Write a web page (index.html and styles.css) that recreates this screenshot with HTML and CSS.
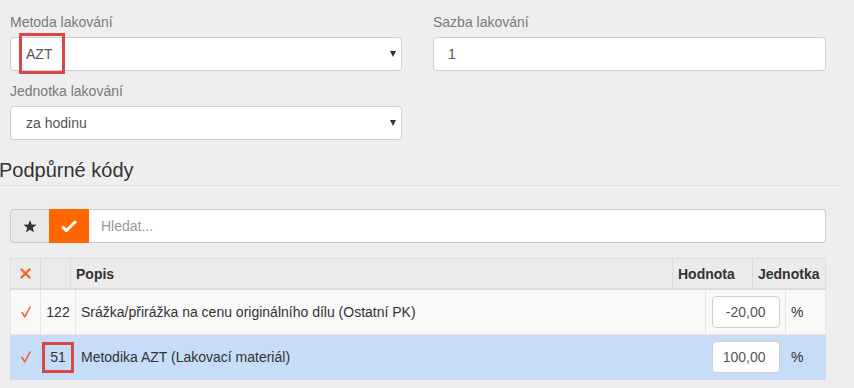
FILE: index.html
```html
<!DOCTYPE html>
<html lang="cs">
<head>
  <meta charset="UTF-8">
  <meta name="viewport" content="width=device-width, initial-scale=1.0">
  <title>Lakování</title>
  <link rel="stylesheet" href="styles.css">
</head>
<body>
  <div class="page">
    <!-- nastavení lakování -->
    <div class="form-row">
      <div class="form-col">
        <label class="field-label" for="metoda">Metoda lakování</label>
        <div class="select-wrap">
          <select id="metoda" class="field">
            <option>AZT</option>
          </select>
          <span class="mark mark-azt"></span>
        </div>
        <label class="field-label second" for="jednotka">Jednotka lakování</label>
        <div class="select-wrap">
          <select id="jednotka" class="field">
            <option>za hodinu</option>
          </select>
        </div>
      </div>
      <div class="form-col">
        <label class="field-label" for="sazba">Sazba lakování</label>
        <input type="text" id="sazba" class="field" value="1">
      </div>
    </div>

    <div class="section-head">
      <h2>Podpůrné kódy</h2>
    </div>

    <!-- hledání -->
    <div class="search-group">
      <button class="btn-star" type="button">
        <svg width="14" height="13" viewBox="0 0 14 13"><polygon points="7,0 8.7,4.6 13.6,4.7 9.7,7.7 11.1,12.5 7,9.7 2.9,12.5 4.3,7.7 0.4,4.7 5.3,4.6" fill="#333"/></svg>
      </button>
      <button class="btn-check" type="button">
        <svg width="16" height="13" viewBox="0 0 16 13"><path d="M2 7.5 L5.5 10.5 L14 2" fill="none" stroke="#fff" stroke-width="3" stroke-linecap="round" stroke-linejoin="round"/></svg>
      </button>
      <input type="text" class="search-input" placeholder="Hledat...">
    </div>

    <!-- tabulka kódů -->
    <table class="codes-head">
      <colgroup>
        <col style="width:30px"><col style="width:30px"><col><col style="width:80px"><col style="width:73px">
      </colgroup>
      <tr>
        <th class="c-icon">
          <svg width="11" height="11" viewBox="0 0 11 11"><path d="M1.5 1.5 L9.5 9.5 M9.5 1.5 L1.5 9.5" stroke="#f26522" stroke-width="2.4" stroke-linecap="round"/></svg>
        </th>
        <th></th>
        <th>Popis</th>
        <th>Hodnota</th>
        <th>Jednotka</th>
      </tr>
    </table>
    <table class="codes-body">
      <colgroup>
        <col style="width:30px"><col style="width:35px"><col><col style="width:80px"><col style="width:40px">
      </colgroup>
      <tr>
        <td class="c-icon">
          <svg width="10" height="12" viewBox="0 0 10 12"><path d="M1 6.5 L3.8 10.8 L9 1" fill="none" stroke="#f26522" stroke-width="1.6" stroke-linecap="round" stroke-linejoin="round"/></svg>
        </td>
        <td class="c-num">122</td>
        <td>Srážka/přirážka na cenu originálního dílu (Ostatní PK)</td>
        <td class="c-val"><input type="text" class="val-input" value="-20,00"></td>
        <td>%</td>
      </tr>
      <tr class="selected">
        <td class="c-icon">
          <svg width="10" height="12" viewBox="0 0 10 12"><path d="M1 6.5 L3.8 10.8 L9 1" fill="none" stroke="#f26522" stroke-width="1.6" stroke-linecap="round" stroke-linejoin="round"/></svg>
        </td>
        <td class="c-num">51<span class="mark mark-num"></span></td>
        <td>Metodika AZT (Lakovací materiál)</td>
        <td class="c-val"><input type="text" class="val-input" value="100,00"></td>
        <td>%</td>
      </tr>
    </table>
  </div>
</body>
</html>
```

FILE: styles.css
```css
body {
  margin: 0;
  padding: 0;
  background-color: #eeeeee;
  font-family: "Liberation Sans", Arial, sans-serif;
  font-size: 14px;
  color: #333;
}

.page {
  width: 816px;
  padding: 12px 0 0 10px;
}

.form-row {
  display: grid;
  grid-template-columns: 392px 393px;
  column-gap: 31px;
}

.field-label {
  display: block;
  line-height: 20px;
  color: #7a7a7a;
  margin-bottom: 5px;
}

.field-label.second {
  margin-top: 10px;
}

.select-wrap {
  position: relative;
}

.select-wrap::after {
  content: "";
  position: absolute;
  right: 6px;
  top: 14px;
  border-left: 3px solid transparent;
  border-right: 3px solid transparent;
  border-top: 6px solid #333;
}

.field {
  display: block;
  box-sizing: border-box;
  width: 100%;
  height: 34px;
  margin: 0;
  padding: 0 14px;
  border: 1px solid #cfcfcf;
  border-radius: 4px;
  background-color: #fff;
  font-family: inherit;
  font-size: 14px;
  color: #555;
  appearance: none;
  -webkit-appearance: none;
  outline: none;
}

select.field {
  padding-left: 15px;
}

.mark {
  position: absolute;
  box-sizing: border-box;
  border: 3px solid #d9474b;
  pointer-events: none;
}

.mark-azt {
  left: 9px;
  top: -4px;
  width: 46px;
  height: 41px;
}

.section-head {
  margin: 19px -14px 0 -10px;
  padding-bottom: 4px;
  border-bottom: 1px solid #dedede;
}

.section-head h2 {
  margin: 0 0 0 -1px;
  font-size: 20px;
  font-weight: normal;
  line-height: 22px;
  color: #333;
}

.search-group {
  display: flex;
  height: 34px;
  margin-top: 23px;
}

.search-group button {
  display: flex;
  align-items: center;
  justify-content: center;
  margin: 0;
  padding: 0;
  height: 34px;
  box-sizing: border-box;
  cursor: pointer;
}

.btn-star {
  width: 39px;
  background-color: #e9e9e9;
  border: 1px solid #cccccc;
  border-right: none;
  border-radius: 4px 0 0 4px;
}

.btn-check {
  width: 40px;
  background-color: #ff6600;
  border: none;
}

.search-input {
  flex: 1;
  box-sizing: border-box;
  height: 34px;
  margin: 0;
  padding: 0 12px;
  border: 1px solid #cccccc;
  border-left: none;
  border-radius: 0 4px 4px 0;
  background-color: #fff;
  font-family: inherit;
  font-size: 14px;
  color: #555;
  outline: none;
}

.search-input::placeholder {
  color: #999;
}

.codes-head, .codes-body {
  width: 816px;
  table-layout: fixed;
  border-collapse: collapse;
}

.codes-head {
  margin-top: 15px;
}

.codes-head th {
  height: 29px;
  padding: 0 5px;
  text-align: left;
  font-weight: bold;
  background-color: #ebebeb;
  border: 1px solid #dddddd;
  border-bottom: 2px solid #dcdcdc;
  white-space: nowrap;
  overflow: hidden;
}

.codes-body td {
  height: 44px;
  padding: 0 5px;
  vertical-align: middle;
  background-color: #f9f9f9;
  border: 1px solid #e6e6e6;
  border-top: none;
  white-space: nowrap;
}

.codes-body tr.selected td {
  background-color: #c6dcf7;
  border-color: #c6dcf7;
}

.c-icon {
  text-align: center;
}

th.c-icon svg, td.c-icon svg {
  display: block;
  margin: 0 auto;
}

.c-num {
  position: relative;
  text-align: center;
}

.mark-num {
  left: 1px;
  top: 7px;
  width: 32px;
  height: 31px;
}

.c-val {
  text-align: center;
}

.val-input {
  box-sizing: border-box;
  width: 68px;
  height: 32px;
  margin: 0;
  padding: 0 13px 0 6px;
  border: 1px solid #d0d0d0;
  border-radius: 4px;
  background-color: #fff;
  font-family: inherit;
  font-size: 14px;
  color: #555;
  text-align: right;
  outline: none;
}
```
